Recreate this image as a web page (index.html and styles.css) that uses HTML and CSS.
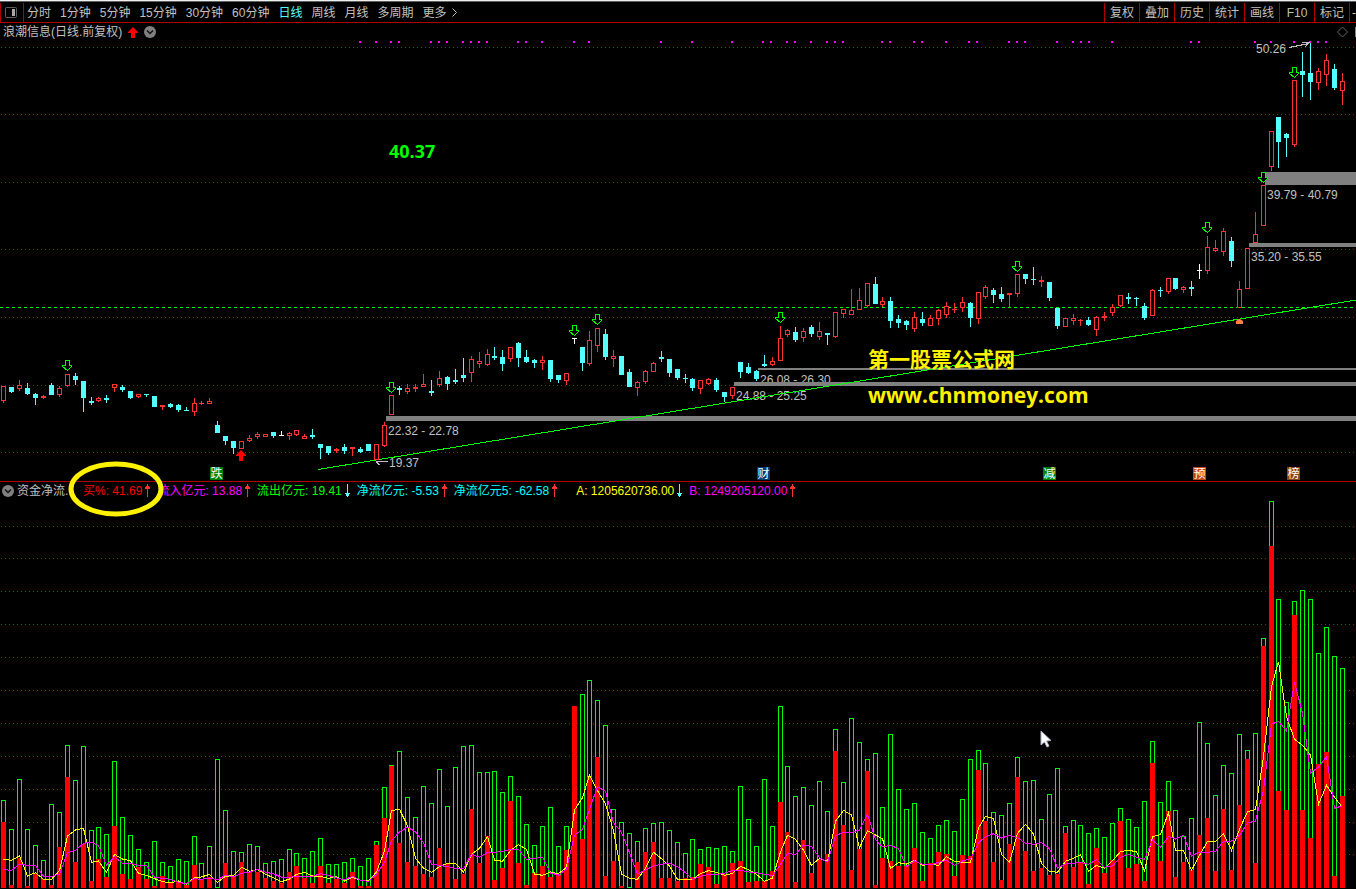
FILE: index.html
```html
<!DOCTYPE html>
<html lang="zh-CN">
<head>
<meta charset="utf-8">
<title>浪潮信息 日线</title>
<link rel="stylesheet" href="styles.css">
</head>
<body>
<header class="toolbar">
  <button class="panel-toggle" aria-label="侧栏">
    <svg width="14" height="14" viewBox="0 0 14 14"><rect x="1.5" y="1.5" width="11" height="10" rx="1" fill="none" stroke="#606060"/><rect x="8" y="3" width="3" height="7" fill="#a8a8a8"/></svg>
  </button>
  <nav class="periods">
    <button>分时</button><button>1分钟</button><button>5分钟</button><button>15分钟</button><button>30分钟</button><button>60分钟</button><button class="active">日线</button><button>周线</button><button>月线</button><button>多周期</button><button>更多<svg class="more" width="5" height="9" viewBox="0 0 5 9"><path d="M.5 .5L4.5 4.5L.5 8.5" fill="none" stroke="#c0c0c0"/></svg></button>
  </nav>
  <nav class="tools">
    <button>复权</button><button>叠加</button><button>历史</button><button>统计</button><button>画线</button><button>F10</button><button>标记</button><button class="cut">-</button>
  </nav>
</header>
<main>
  <div class="symbol">
    <span>浪潮信息(日线.前复权)</span>
    <svg width="10" height="11" viewBox="0 0 10 11"><path d="M5 0L10 5V6H7V11H3V6H0V5Z" fill="#f00"/></svg>
    <button class="round" aria-label="展开"><svg width="12" height="12" viewBox="0 0 12 12"><circle cx="6" cy="6" r="6" fill="#808080"/><path d="M3 4.5L6 7.5L9 4.5" fill="none" stroke="#111" stroke-width="1.5"/></svg></button>
    <svg class="corner" width="20" height="12" viewBox="0 0 20 12"><path d="M6.500 1L11.500 6L6.500 11L1.500 6Z" fill="none" stroke="#686868"/><path d="M19.500 1V11" stroke="#808080"/></svg>
  </div>
  <svg id="price" class="chart" viewBox="0 41 1356 440" role="img" aria-label="日K线"></svg>
  <div class="indicator">
    <button class="round" aria-label="指标"><svg width="12" height="12" viewBox="0 0 12 12"><circle cx="6" cy="6" r="6" fill="#808080"/><path d="M3 4.500L6 7.500L9 4.500" fill="none" stroke="#111" stroke-width="1.500"/></svg></button>
    <span class="name">资金净流.</span>
    <span class="item red marked">买%: 41.69<svg class="arrow up" viewBox="0 0 5 13"><path d="M2 0H3V2H4V3H5V5H3V13H2V5H0V3H1V2H2Z"/></svg><svg class="ring" width="96" height="56" viewBox="0 0 96 56"><ellipse cx="48" cy="28" rx="45" ry="25" fill="none" stroke="#fff200" stroke-width="5"/></svg></span>
    <span class="item magenta">流入亿元: 13.88<svg class="arrow up" viewBox="0 0 5 13"><path d="M2 0H3V2H4V3H5V5H3V13H2V5H0V3H1V2H2Z"/></svg></span>
    <span class="item green">流出亿元: 19.41<svg class="arrow down" viewBox="0 0 5 13"><path d="M2 0H3V9H5V10H4V12H3V13H2V12H1V10H0V9H2Z"/></svg></span>
    <span class="item cyan">净流亿元: -5.53<svg class="arrow up" viewBox="0 0 5 13"><path d="M2 0H3V2H4V3H5V5H3V13H2V5H0V3H1V2H2Z"/></svg></span>
    <span class="item cyan">净流亿元5: -62.58<svg class="arrow up" viewBox="0 0 5 13"><path d="M2 0H3V2H4V3H5V5H3V13H2V5H0V3H1V2H2Z"/></svg></span>
    <span class="item yellow">A: 1205620736.00<svg class="arrow down" viewBox="0 0 5 13"><path d="M2 0H3V9H5V10H4V12H3V13H2V12H1V10H0V9H2Z"/></svg></span>
    <span class="item magenta">B: 1249205120.00<svg class="arrow up" viewBox="0 0 5 13"><path d="M2 0H3V2H4V3H5V5H3V13H2V5H0V3H1V2H2Z"/></svg></span>
  </div>
  <svg id="volume" class="chart" viewBox="0 499 1356 390" role="img" aria-label="资金净流"></svg>
</main>
<script src="chart.js"></script>
</body>
</html>
```
FILE: styles.css
```css
* { box-sizing: border-box; }
body {
  margin: 0;
  background: #000;
  color: #c0c0c0;
  font: 12px/18px "Liberation Sans", "Noto Sans CJK SC", sans-serif;
  overflow: hidden;
}
button {
  margin: 0;
  padding: 0;
  border: 0;
  background: none;
  color: inherit;
  font: inherit;
  white-space: nowrap;
}
svg { display: block; }
.toolbar {
  display: flex;
  height: 23px;
  border-top: 1px solid #f0f0f0;
  border-bottom: 1px solid #b00000;
  box-shadow: inset 0 1px #606060;
  padding-top: 2px;
}
.panel-toggle {
  width: 24px;
  padding-left: 3px;
  border-left: 1px solid #b00000;
  border-right: 1px solid #b00000;
}
.periods {
  display: flex;
  flex: 1;
  gap: 9px;
  padding-left: 3px;
}
.periods button { display: flex; align-items: center; }
.periods .active { color: #54ffff; }
.more { margin-left: 5px; }
.tools { display: flex; }
.tools button {
  width: 35px;
  border-left: 1px solid #b00000;
}
.tools .cut { width: 7px; overflow: hidden; text-align: right; }
.symbol {
  display: flex;
  align-items: center;
  gap: 6px;
  height: 18px;
  padding-left: 3px;
}
.corner { margin-left: auto; }
.chart { width: 100%; height: auto; }
.indicator {
  display: flex;
  align-items: center;
  gap: 6px;
  height: 18px;
  border-top: 1px solid #b00000;
  padding-left: 2px;
  white-space: nowrap;
}
.indicator .name { width: 60px; margin-left: -3px; }
.item { display: flex; align-items: center; }
.arrow { width: 5px; height: 13px; margin: 0 1px 0 3px; shape-rendering: crispEdges; }
.up { fill: #ff3232; }
.down { fill: #54ffff; }
.marked { position: relative; }
.ring { position: absolute; left: -15px; top: -21px; z-index: 1; }
.red { color: #f00; }
.magenta { color: #f0f; }
.green { color: #0f0; }
.cyan { color: #0ff; }
.yellow { color: #ff0; margin-left: 12px; }

.crisp { shape-rendering: crispEdges; }
.grid { stroke: #b01818; stroke-dasharray: 1 3; }
.level { stroke: #0f0; stroke-dasharray: 3 3; }
.trend { stroke: #0f0; fill: none; }
.gap { fill: #808080; }
.rise { stroke: #ff3232; fill: #000; }
.fall { stroke: #54ffff; fill: #54ffff; }
.flat { stroke: #fff; fill: #fff; }
.dot { fill: #f0f; }
.signal { fill: #000; stroke: #0f0; }
.buy { fill: #f00; }
.marker { fill: #ff8040; }
.pointer { fill: none; stroke: #c0c0c0; }
.label { fill: #c0c0c0; }
.quote { fill: #0f0; font: bold 18px "Open Sans", sans-serif; }
.brand { fill: #fff200; font: bold 21px "Open Sans", "Noto Sans CJK SC", sans-serif; }
.badge { fill: #fff; text-anchor: middle; }
.total { stroke: #0f0; fill: #000; }
.inflow { fill: #f00; }
.line-a { fill: none; stroke: #ff0; }
.line-b { fill: none; stroke: #f0f; }
.mouse { fill: #fff; stroke: #b0b0c0; }
```
FILE: chart.js
```js
const NS = 'http://www.w3.org/2000/svg';
function el(parent, tag, attrs, text) {
  const e = document.createElementNS(NS, tag);
  for (const k in attrs) e.setAttribute(k, attrs[k]);
  if (text) e.textContent = text;
  parent.appendChild(e);
  return e;
}
const barX = i => 3 + 8 * i - Math.floor((i + 0.5) / 12.375);

// Blocks of bars: an origin on the y axis, then values in thirds of a unit below it.
function parse(blocks) {
  const out = [];
  for (const [origin, src] of blocks)
    for (const row of src.trim().split(/\s*,\s*/)) {
      const p = row.split(' ');
      const kind = isNaN(p[0]) ? p.shift() : '';
      out.push({ kind, v: p.map(n => origin + n / 3) });
    }
  return out;
}

const candles = parse([
[350, `r 108 108 153 159,c 111 111 126 129,r 90 105 117 123,c 99 114 132 135,c 129 132 144 165,r 135 138 144 147,c 99 105 135 135,r 108 114 135 141,r 72 72 108 111,c 69 78 90 105,c 93 93 144 186,c 141 153 159 165,r 141 144 153 156,c 135 144 150 159,r 102 102 114 126,c 105 111 120 126,c 123 123 144 147,r 132 132 141 144,c 132 132 135 141,c 138 138 171 171,r 165 165 171 180,c 159 162 171 174,c 162 165 180 186,c 171 180 183 183,r 144 159 186 198,r 153 159 162 165,r 144 153 162 162,c 213 225 249 249,c 258 258 273 285,c 273 273 294 312,r 273 273 297 297,r 255 264 273 276,r 246 252 261 267,r 252 252 261 261,c 246 246 258 264,w 243 255 258 258,r 246 249 258 270,r 240 240 255 258,r 252 258 267 267,c 237 255 261 267,c 282 282 294 327,c 288 288 309 315,r 294 297 303 309`],
[300, `c 432 441 453 462,r 441 441 447 468,c 441 447 456 459,c 432 432 453 453,r 432 432 480 480,r 366 375 438 441,r 285 285 345 345,c 258 264 270 285,r 252 264 276 282,r 252 261 267 276,r 222 252 261 261,c 240 273 279 288,r 213 234 255 261,c 228 231 252 270,c 207 240 246 252,c 174 225 234 246,r 168 177 219 246,r 156 183 192 204,r 147 162 195 198,c 141 168 174 180,c 150 171 192 213,r 141 141 177 186,c 126 129 174 201,c 150 171 186 189,c 177 180 189 204,r 168 180 189 210,c 180 180 237 246,c 225 225 240 249,r 219 219 243 255,w 114 114 117 132,c 141 141 189 213,r 93 120 192 198,r 84 84 138 156,c 87 102 171 180,r 150 168 177 201,c 168 168 225 225,c 207 216 261 261,r 243 246 264 288,r 210 213 246 252,r 186 189 216 216,c 153 171 177 186,c 177 177 219 231,c 207 207 234 240`],
[260, `c 342 354 357 369,c 354 357 384 393,r 360 360 387 402,r 354 357 372 375,c 354 360 390 396,c 396 396 411 426,r 381 381 408 417,c 306 306 336 354,c 309 321 339 342,c 330 333 357 363,c 285 312 318 321,r 291 303 315 318,r 198 234 303 303,r 207 210 225 231,c 201 216 240 246,r 204 213 234 246,c 195 201 222 231,r 186 213 231 240,c 219 219 225 255,r 156 156 231 234,r 147 147 162 174,r 87 150 165 165,r 84 120 150 150,r 69 69 138 141,c 51 72 132 132,r 111 123 135 141,c 111 123 183 204,c 165 177 189 204,c 180 183 195 210,r 156 171 207 216,c 156 177 189 198,r 165 174 198 198,r 147 150 177 195,r 126 138 165 174,r 129 147 150 159,r 111 126 144 156,c 126 129 174 201,r 96 96 177 192,r 75 81 111 117,c 84 90 105 129,c 81 102 117 126,r 99 99 105 141,r 42 42 102 111`],
[210, `c 192 192 207 222,c 171 207 210 225,r 198 210 216 231,c 216 216 264 273,c 294 294 348 357,r 324 324 351 351,r 312 324 333 345,r 327 330 333 348,c 321 330 345 348,r 318 321 360 378,r 306 318 324 333,r 282 291 309 318,r 255 255 288 291,c 249 261 267 282,c 261 264 267 288,c 279 288 324 330,r 237 240 318 318,c 231 240 243 261,r 204 204 246 252,c 204 204 237 240,r 228 231 240 249,c 213 231 237 258,w 162 180 183 207,r 78 111 183 192,r 90 114 123 126,r 54 63 126 138,c 81 93 153 171,r 213 237 294 294,r 114 114 237 237`],
[0, `r 636 702 729 729,r 555 555 678 678,r 393 393 501 513,c 351 351 426 504,c 399 402 414 471,r 240 240 435 441,c 156 213 225 291,c 129 219 246 300,r 204 213 249 270,r 162 180 225 258,c 192 207 264 270,r 219 243 273 315`]
]);

// total, inflow
const volumes = parse([
[730, `210 276,297 465,147 384,297 468,345 429,390 447,222 465,246 351,45 141,150 396,48 342,300 453,291 387,312 441,93 288,261 432,315 447,357 411,396 447,333 468,396 438,408 456,387 456,393 465,318 405,399 447,348 441,87 474,240 399,363 438,366 396,342 426,348 426,399 444,393 453,387 459,357 426,369 408,384 444,363 459,324 408,402 459,402 447`],
[670, `576 639,564 606,588 648,564 648,513 525,351 444,285 288,243 519,381 576,441 588,348 612,399 621,297 534,408 579,291 627,228 612,225 417,306 579,306 498,303 630,366 594,318 393,378 579,462 645,525 609,468 588,411 621,528 615,468 540,108 108,72 507,30 321,90 261,165 618,417 573,456 648,489 654,513 576,474 546,459 516,456 624,480 624,516 633`],
[700, `459 534,417 531,447 492,441 501,444 552,438 522,453 489,258 483,357 546,438 543,237 543,378 513,18 306,198 396,288 546,261 420,315 519,243 477,333 462,87 153,246 375,54 510,126 447,177 213,159 555,321 474,102 483,267 498,327 498,309 444,396 543,414 489,375 456,360 462,393 528,297 465,177 468,150 210,189 363,336 486,345 540,309 432,171 231,243 453,240 513,357 504,282 525,204 522,378 399,360 501,375 489,399 552,384 444,411 519,369 480,324 363,357 504,381 492,303 543,123 189,306 483,243 333,330 531,408 486,354 510,66 405`],
[490, `759 984,915 1143,825 957,849 1140,732 945,780 807,729 1119,444 468,33 168,327 903,636 960,333 375,300 960,327 1044,489 822,411 786,498 1158,534 918`]
]);

const lineA = parse([
[730, `388,391,378,438,428,448,448,422,318,300,295,397,393,427,373,387,392,430,436,446,455,458,453,463,443,441,433,457,439,437,412,424,418,433,443,455,447,433,427,438,439,445,440`],
[670, `633,622,631,633,606,543,422,418,467,565,594,607,590,580,580,607,553,535,500,570,574,541,524,538,612,616,606,611,592,420,383,315,362,402,482,612,625,628,594,547,566,588,628`],
[700, `538,538,521,512,517,526,520,499,509,523,544,534,456,406,418,451,496,475,484,364,331,345,443,392,405,416,505,488,492,481,496,493,496,470,484,487,487,384,349,355,463,487,400,373,402,490,514,517,484,475,464,514,496,505,482,455,451,455,513,410,404,338,451,451,511,466`],
[490, `1054,1054,1031,1081,1018,965,959,800,590,515,680,748,766,795,943,886,922,952`]
]);
const lineB = parse([
[730, `418,422,402,406,406,439,439,432,368,361,340,337,347,406,380,400,400,406,406,442,445,448,457,461,446,448,444,449,436,441,430,427,418,427,431,442,442,439,439,439,431,436,444`],
[670, `629,619,631,634,613,577,512,486,472,485,519,583,586,590,596,596,552,562,547,547,544,538,538,568,565,562,609,615,597,496,478,418,350,364,458,487,548,612,600,588,583,580,590`],
[700, `518,538,529,523,523,520,511,511,516,518,523,527,493,460,464,435,439,473,487,407,397,397,390,342,419,441,436,446,500,483,493,495,487,481,496,483,476,428,410,401,414,406,413,430,433,428,446,504,492,490,487,493,479,502,498,472,463,472,478,420,442,409,417,406,468,456`],
[490, `1087,1084,1054,1053,1036,999,993,900,703,694,723,575,670,849,831,800,955,947`]
]);

const price = document.getElementById('price');
const volume = document.getElementById('volume');
function rows(svg, ys) {
  for (const y of ys) el(svg, 'path', { d: `M1 ${y + .5}H1356`, class: 'grid crisp' });
}

rows(price, [47, 114, 182, 249, 317, 385, 452]);
el(price, 'path', { d: 'M0 307.5H1356', class: 'level crisp' });
for (const [x, y, t] of [[1267, 199, '39.79 - 40.79'], [1251, 261, '35.20 - 35.55'], [388, 435, '22.32 - 22.78'], [760, 384, '26.08 - 26.30'], [736, 400, '24.88 - 25.25'], [1256, 53, '50.26'], [389, 467, '19.37']])
  el(price, 'text', { x, y, class: 'label' }, t);
for (const [x, y, h] of [[1265, 172, 13], [1249, 243, 4], [386, 416, 5], [758, 368, 2], [734, 382, 4]])
  el(price, 'rect', { x, y, width: 1356 - x, height: h, class: 'gap' });
el(price, 'path', { d: 'M318 469.500L1356 300', class: 'trend crisp' });
candles.forEach((c, i) => {
  const x = barX(i), [hi, top, bot, lo] = c.v;
  const cls = { r: 'rise', c: 'fall', w: 'flat' }[c.kind] + ' crisp';
  if (lo > hi) el(price, 'path', { d: `M${x + .5} ${hi}V${lo}`, class: cls });
  const h = bot - top;
  if (h <= 1) el(price, 'path', { d: `M${x - 2} ${top + .5}h5`, class: cls });
  else el(price, 'rect', { x: x - 1.5, y: top + .5, width: 4, height: h - 1, class: cls });
});
for (const x of [360, 376, 391, 399, 431, 439, 447, 463, 471, 479, 487, 518, 526, 542, 574, 589, 661, 692, 732, 763, 771, 787, 795, 811, 827, 835, 843, 882, 890, 914, 922, 946, 969, 977, 1009, 1017, 1025, 1057, 1073, 1081, 1089, 1112, 1191, 1199, 1255, 1271, 1294, 1310, 1318, 1326])
  el(price, 'rect', { x: x - 1, y: 41, width: 2, height: 2, class: 'dot' });
for (const [i, y] of [[8, 360], [49, 382], [72, 325], [75, 314], [98, 312], [128, 261], [152, 222], [159, 172], [163, 67]]) {
  const x = barX(i);
  el(price, 'path', { d: `M${x - 1.5} ${y + .5}H${x + 2.5}V${y + 5.5}H${x + 4.5}V${y + 6.5}L${x + .5} ${y + 10.5}L${x - 4.5} ${y + 6.5}V${y + 5.5}H${x - 1.5}Z`, class: 'signal crisp' });
}
el(price, 'path', { d: 'M241 450L246 455V456H243V461H239V456H236V455Z', class: 'buy' });
el(price, 'path', { d: 'M1236 324V321L1239 319H1240L1243 321V324Z', class: 'marker' });
el(price, 'path', { d: 'M1289 47.500L1309 43.500M1302 42.500H1309L1305 47', class: 'pointer crisp' });
el(price, 'path', { d: 'M388 461.500H376M381 461.500H376V462L380 465', class: 'pointer crisp' });
el(price, 'text', { x: 389, y: 158, class: 'quote' }, '40.37');
el(price, 'text', { x: 868, y: 367, class: 'brand' }, '第一股票公式网');
el(price, 'text', { x: 868, y: 403, class: 'brand' }, 'www.chnmoney.com');
for (const [x, t, c] of [[210, '跌', '#008000'], [757, '财', '#003c78'], [1043, '减', '#008000'], [1193, '预', '#c04810'], [1287, '榜', '#8a4510']]) {
  el(price, 'rect', { x, y: 467, width: 13, height: 13, fill: c });
  el(price, 'text', { x: x + 6.5, y: 478, class: 'badge' }, t);
}

rows(volume, [526, 558, 591, 624, 657, 690, 723, 756, 789, 822, 854]);
volumes.forEach((b, i) => {
  const x = barX(i), [top, red] = b.v;
  el(volume, 'rect', { x: x - 1.5, y: top + .5, width: 4, height: 887 - top, class: 'total crisp' });
  el(volume, 'rect', { x: x - 2, y: red, width: 5, height: 888 - red, class: 'inflow crisp' });
});
const points = s => s.map((p, i) => `${barX(i) + .5},${p.v[0]}`).join(' ');
el(volume, 'polyline', { points: points(lineA), class: 'line-a crisp' });
el(volume, 'polyline', { points: points(lineB), class: 'line-b crisp' });
el(volume, 'path', { d: 'M1041 731V745L1044.500 742L1047 747L1049 746L1046.500 741L1051 740.500Z', class: 'mouse' });
```
